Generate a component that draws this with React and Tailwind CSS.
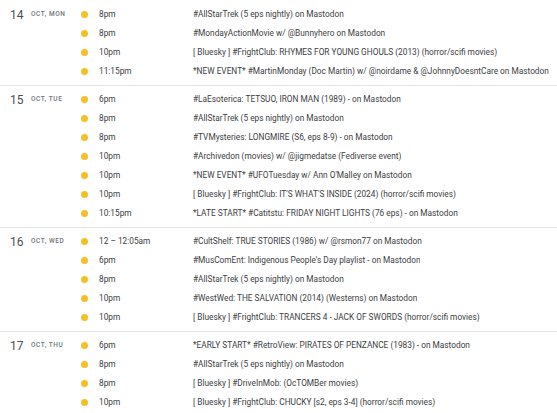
import React from 'react';

const days = [
    {
        num: '14',
        label: 'Oct, Mon',
        events: [
            ['8pm', '#AllStarTrek (5 eps nightly) on Mastodon'],
            ['8pm', '#MondayActionMovie w/ @Bunnyhero on Mastodon'],
            ['10pm', '[ Bluesky ] #FrightClub: RHYMES FOR YOUNG GHOULS (2013) (horror/scifi movies)'],
            ['11:15pm', '*NEW EVENT* #MartinMonday (Doc Martin) w/ @noirdame & @JohnnyDoesntCare on Mastodon'],
        ],
    },
    {
        num: '15',
        label: 'Oct, Tue',
        events: [
            ['6pm', '#LaEsoterica: TETSUO, IRON MAN (1989) - on Mastodon'],
            ['8pm', '#AllStarTrek (5 eps nightly) on Mastodon'],
            ['8pm', '#TVMysteries: LONGMIRE (S6, eps 8-9) - on Mastodon'],
            ['10pm', '#Archivedon (movies) w/ @jigmedatse (Fediverse event)'],
            ['10pm', "*NEW EVENT* #UFOTuesday w/ Ann O'Malley on Mastodon"],
            ['10pm', "[ Bluesky ] #FrightClub: IT'S WHAT'S INSIDE (2024) (horror/scifi movies)"],
            ['10:15pm', '*LATE START* #Catitstu: FRIDAY NIGHT LIGHTS (76 eps) - on Mastodon'],
        ],
    },
    {
        num: '16',
        label: 'Oct, Wed',
        events: [
            ['12 – 12:05am', '#CultShelf: TRUE STORIES (1986) w/ @rsmon77 on Mastodon'],
            ['6pm', "#MusComEnt: Indigenous People's Day playlist - on Mastodon"],
            ['8pm', '#AllStarTrek (5 eps nightly) on Mastodon'],
            ['10pm', '#WestWed: THE SALVATION (2014) (Westerns) on Mastodon'],
            ['10pm', '[ Bluesky ] #FrightClub: TRANCERS 4 - JACK OF SWORDS (horror/scifi movies)'],
        ],
    },
    {
        num: '17',
        label: 'Oct, Thu',
        events: [
            ['6pm', '*EARLY START* #RetroView: PIRATES OF PENZANCE (1983) - on Mastodon'],
            ['8pm', '#AllStarTrek (5 eps nightly) on Mastodon'],
            ['8pm', '[ Bluesky ] #DriveInMob: (OcTOMBer movies)'],
            ['10pm', '[ Bluesky ] #FrightClub: CHUCKY [s2, eps 3-4] (horror/scifi movies)'],
        ],
    },
];

const App = () => {
    return (
        <div className="w-[557px] h-[413px] overflow-hidden bg-white pt-[1px] font-['Roboto',sans-serif] text-[#3c4043]">
            {days.map((day) => (
                <div key={day.num} className="flex border-b border-[#e3e4e6] py-[4px]">
                    {/* Date */}
                    <div className="w-[81px] shrink-0 pl-[10px] h-[19px] flex items-center">
                        <span className="text-[12px] leading-none w-[21px] font-normal text-[#4a4e52]">{day.num}</span>
                        <span className="text-[6.5px] uppercase tracking-[0.6px] text-[#70757a] leading-none font-medium">
                            {day.label}
                        </span>
                    </div>

                    {/* Events */}
                    <div className="flex-1 min-w-0">
                        {day.events.map(([time, title], i) => (
                            <div key={i} className="flex items-center h-[19px] text-[8.3px] leading-none">
                                <span className="w-[7px] h-[7px] rounded-full bg-[#f6bf26] shrink-0" />
                                <span className="ml-[11px] w-[94px] shrink-0 whitespace-nowrap">{time}</span>
                                <span className="whitespace-nowrap truncate">{title}</span>
                            </div>
                        ))}
                    </div>
                </div>
            ))}
        </div>
    );
};

export default App;
